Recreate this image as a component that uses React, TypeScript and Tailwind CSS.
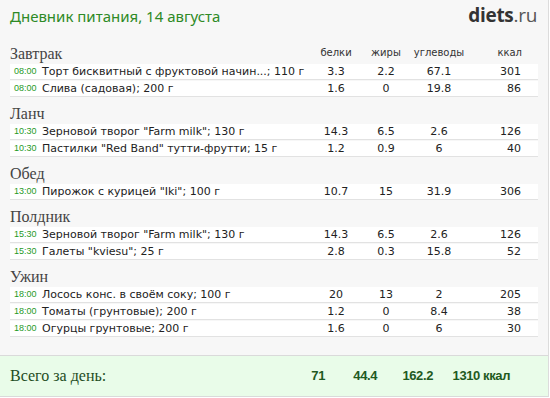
type Item = { time: string; name: string; p: string; f: string; c: string; k: string };
type Meal = { title: string; items: Item[] };

const meals: Meal[] = [
  {
    title: 'Завтрак',
    items: [
      { time: '08:00', name: 'Торт бисквитный с фруктовой начин...; 110 г', p: '3.3', f: '2.2', c: '67.1', k: '301' },
      { time: '08:00', name: 'Слива (садовая); 200 г', p: '1.6', f: '0', c: '19.8', k: '86' },
    ],
  },
  {
    title: 'Ланч',
    items: [
      { time: '10:30', name: 'Зерновой творог "Farm milk"; 130 г', p: '14.3', f: '6.5', c: '2.6', k: '126' },
      { time: '10:30', name: 'Пастилки "Red Band" тутти-фрутти; 15 г', p: '1.2', f: '0.9', c: '6', k: '40' },
    ],
  },
  {
    title: 'Обед',
    items: [{ time: '13:00', name: 'Пирожок с курицей "Iki"; 100 г', p: '10.7', f: '15', c: '31.9', k: '306' }],
  },
  {
    title: 'Полдник',
    items: [
      { time: '15:30', name: 'Зерновой творог "Farm milk"; 130 г', p: '14.3', f: '6.5', c: '2.6', k: '126' },
      { time: '15:30', name: 'Галеты "kviesu"; 25 г', p: '2.8', f: '0.3', c: '15.8', k: '52' },
    ],
  },
  {
    title: 'Ужин',
    items: [
      { time: '18:00', name: 'Лосось конс. в своём соку; 100 г', p: '20', f: '13', c: '2', k: '205' },
      { time: '18:00', name: 'Томаты (грунтовые); 200 г', p: '1.2', f: '0', c: '8.4', k: '38' },
      { time: '18:00', name: 'Огурцы грунтовые; 200 г', p: '1.6', f: '0', c: '6', k: '30' },
    ],
  },
];

function Row({ item }: { item: Item }) {
  return (
    <div className="flex items-center h-[16px] mb-px bg-white border-b border-[#e2e2e2] text-[11px] text-[#222] font-['DejaVu_Sans',sans-serif] leading-none">
      <div className="flex-1 flex items-center min-w-0 whitespace-nowrap">
        <span className="w-[32px] pl-[4px] text-[9px] text-[#1f9a1f] font-['Liberation_Sans',Arial,sans-serif]">{item.time}</span>
        <span>{item.name}</span>
      </div>
      <div className="w-[50px] text-center">{item.p}</div>
      <div className="w-[50px] text-center">{item.f}</div>
      <div className="w-[56px] text-center">{item.c}</div>
      <div className="w-[71px] text-right pr-[17px]">{item.k}</div>
    </div>
  );
}

export default function App() {
  return (
    <div className="w-[549px] bg-[#f7f7f7] border-r border-[#dcdcdc]">
      <div className="h-[38px] flex items-start justify-between pl-[10px] pr-[11px] pt-[6px]">
        <h1 className="text-[15px] leading-[20px] text-[#2e8a26] font-['Noto_Sans',sans-serif]">Дневник питания, 14 августа</h1>
        <div className="text-[19px] leading-[20px] text-[#333] font-['Open_Sans',sans-serif] tracking-[-0.3px] mt-[-1px]">
          <span className="font-bold">diets</span>
          <span className="text-[#555]">.ru</span>
        </div>
      </div>

      {meals.map((meal, i) => (
        <div key={meal.title} className="px-[10px]">
          <div className="h-[26px] flex items-end pb-[1px]">
            <div className="flex-1 text-[16px] leading-[18px] text-[#444] font-['Liberation_Serif',serif]">{meal.title}</div>
            {i === 0 && (
              <div className="flex text-[10px] leading-[12px] text-[#333] font-['DejaVu_Sans',sans-serif] pb-[4px]">
                <div className="w-[50px] text-center">белки</div>
                <div className="w-[50px] text-center">жиры</div>
                <div className="w-[56px] text-center">углеводы</div>
                <div className="w-[71px] text-right pr-[16px]">ккал</div>
              </div>
            )}
          </div>
          {meal.items.map((item, j) => (
            <Row key={j} item={item} />
          ))}
        </div>
      ))}

      <div className="mt-[18px] h-[42px] bg-[#e9fce9] border-t border-b border-[#dadada] flex items-center pl-[10px]">
        <div className="flex-1 text-[16px] text-[#1e4d1e] font-['Liberation_Serif',serif]">Всего за день:</div>
        <div className="flex text-[13px] font-bold text-[#1f5a1f] font-['Liberation_Sans',Arial,sans-serif] tracking-[-0.4px]">
          <div className="w-[40px] text-right">71</div>
          <div className="w-[52px] text-right">44.4</div>
          <div className="w-[56px] text-right">162.2</div>
          <div className="w-[77px] text-right">1310 ккал</div>
        </div>
        <div className="w-[38px]" />
      </div>
    </div>
  );
}
